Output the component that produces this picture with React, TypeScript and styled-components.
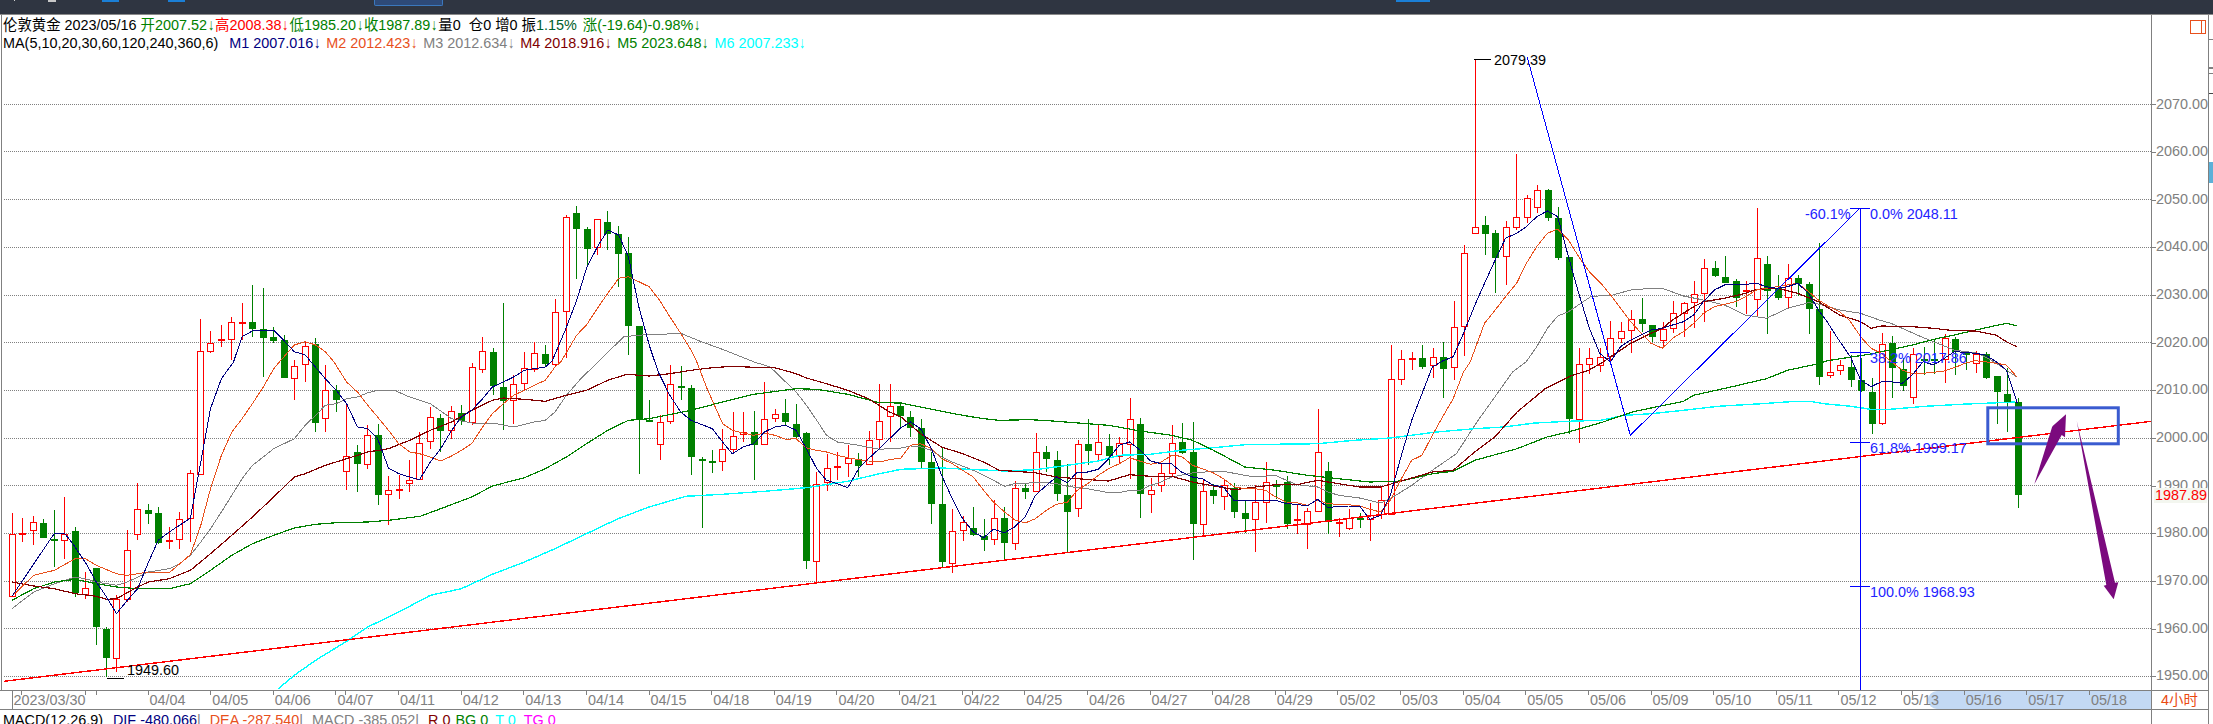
import React from "react";
import styled, { createGlobalStyle } from "styled-components";

const FONT = `"Liberation Sans", "Noto Sans CJK SC", Arial, sans-serif`;

const Global = createGlobalStyle`
  html, body { margin: 0; padding: 0; background: #fff; overflow: hidden; }
  #root { width: 2213px; height: 724px; }
`;

const Page = styled.div`
  width: 2213px;
  height: 724px;
  overflow: hidden;
  background: #fff;
  font: 14.4px/18px ${FONT};
  display: flex;
  flex-direction: column;
`;

const TopBar = styled.div`
  flex: none;
  height: 14px;
  background: #2f3541;
  border-bottom: 1px solid #8a8a8a;
  display: flex;
  align-items: flex-start;
`;

const TopMark = styled.span<{ $gap: number; $w: number; $h: number; $c: string; $line?: string }>`
  flex: none;
  margin-left: ${(p) => p.$gap}px;
  width: ${(p) => p.$w}px;
  height: ${(p) => p.$h}px;
  background: ${(p) => p.$c};
  box-sizing: border-box;
  border-bottom: ${(p) => (p.$line ? `1px solid ${p.$line}` : "none")};
  border-left: ${(p) => (p.$line ? `1px solid ${p.$line}` : "none")};
  border-right: ${(p) => (p.$line ? `1px solid ${p.$line}` : "none")};
  border-radius: ${(p) => (p.$line ? "0 0 2px 2px" : "0")};
`;

const ChartRow = styled.div`
  flex: none;
  height: 675px;
  display: flex;
`;

const Plot = styled.div`
  position: relative;
  flex: none;
  box-sizing: border-box;
  width: 2151px;
  height: 675px;
  border-left: 1px solid #808080;
  margin-left: 1px;
  margin-right: -1px;
`;

const PlotSvg = styled.svg`
  display: block;
  width: 2150px;
  height: 675px;
`;

const Info = styled.div`
  position: absolute;
  left: 1px;
  top: 1px;
`;

const InfoRow = styled.div`
  display: flex;
  height: 18.4px;
  white-space: pre;
`;

const Seg = styled.span<{ $c: string; $gap?: number }>`
  color: ${(p) => p.$c};
  margin-left: ${(p) => p.$gap ?? 0}px;
`;

const Arrow = styled.span<{ $c: string }>`
  color: ${(p) => p.$c};
  display: inline-block;
  width: 8px;
  text-align: center;
  font-size: 16px;
  transform: scaleX(0.75);
`;

const PriceAxis = styled.div`
  position: relative;
  flex: none;
  box-sizing: border-box;
  width: 58px;
  height: 709px;
  margin-bottom: -34px;
  border-left: 1px solid #808080;
  border-right: 1px solid #808080;
  padding-top: 65.5px;
  z-index: 2;
  background: transparent;
`;

const PriceLabel = styled.div`
  position: relative;
  height: 47.67px;
  line-height: 47.67px;
  padding-left: 4px;
  color: #808080;
  &::before {
    content: "";
    position: absolute;
    left: 0;
    top: 50%;
    width: 4px;
    border-top: 1px solid #808080;
  }
`;

const LastPrice = styled.div`
  position: absolute;
  left: 2px;
  top: 473px;
  width: 53px;
  height: 15px;
  line-height: 15px;
  padding-left: 1px;
  box-sizing: border-box;
  color: #f00;
  background: #f3f6ef;
`;

const CornerBox = styled.div`
  position: absolute;
  left: 38px;
  top: 5px;
  width: 16px;
  height: 14px;
  box-sizing: border-box;
  border: 1px solid #e8501c;
  &::after {
    content: "";
    position: absolute;
    right: 3px;
    top: 0;
    bottom: 0;
    border-left: 1px solid #e8501c;
  }
`;

const Gutter = styled.div`
  flex: 1;
  display: flex;
  flex-direction: column;
`;

const GutterMark = styled.div<{ $gap: number; $h: number; $c: string }>`
  margin-top: ${(p) => p.$gap}px;
  height: ${(p) => p.$h}px;
  background: ${(p) => p.$c};
`;

const TimeRow = styled.div`
  flex: none;
  height: 20px;
  box-sizing: border-box;
  display: flex;
  border-top: 1px solid #808080;
  border-bottom: 1px solid #808080;
  width: 2209px;
`;

const TimeAxis = styled.div`
  position: relative;
  flex: none;
  width: 2151px;
  height: 18px;
  display: flex;
  box-sizing: border-box;
  padding-left: 11.5px;
`;

const Selection = styled.div`
  position: absolute;
  left: 1928px;
  right: 0;
  top: 0;
  bottom: 0;
  background: #c3d9f4;
  border-radius: 9px 0 0 9px;
`;

const FirstCell = styled.div`
  position: relative;
  flex: none;
  width: 136px;
  box-sizing: border-box;
  border-left: 1px solid #808080;
  padding-left: 1px;
  color: #808080;
`;

const TimeCell = styled.div`
  position: relative;
  flex: none;
  width: 62.64px;
  padding-left: 2px;
  box-sizing: border-box;
  color: #808080;
  &::before {
    content: "";
    position: absolute;
    left: 0;
    top: 0;
    height: 4px;
    border-left: 1px solid #808080;
  }
`;

const StrayTick = styled.span<{ $x: number }>`
  position: absolute;
  left: ${(p) => p.$x}px;
  top: 0;
  height: 4px;
  border-left: 1px solid #808080;
`;

const CycleCell = styled.div`
  flex: none;
  width: 58px;
  box-sizing: border-box;
  border-left: 1px solid #808080;
  padding-left: 9px;
  color: #ea4a10;
`;

const MacdRow = styled.div`
  flex: 1;
  display: flex;
  white-space: pre;
  padding: 1px 0 0 3px;
  box-sizing: border-box;
  position: relative;
  width: 2209px;
  box-shadow: inset -1px 0 0 #808080;
`;

const MacdAxisLine = styled.div`
  position: absolute;
  left: 2151px;
  top: 0;
  bottom: 0;
  border-left: 1px solid #808080;
`;

const Chip = styled.text<{ $c: string }>`
  font: 14.4px ${FONT};
  fill: ${(p) => p.$c};
`;

const Ma = styled.polyline<{ $c: string; $w: number }>`
  fill: none;
  stroke: ${(p) => p.$c};
  stroke-width: ${(p) => p.$w};
  stroke-linejoin: round;
  shape-rendering: crispEdges;
`;

const Grid = styled.line`
  stroke: #808080;
  stroke-width: 1;
  stroke-dasharray: 1 1;
  shape-rendering: crispEdges;
`;

const Rule = styled.line<{ $c: string; $w?: number }>`
  stroke: ${(p) => p.$c};
  stroke-width: ${(p) => p.$w ?? 1};
  shape-rendering: crispEdges;
`;

const Body = styled.rect<{ $up: boolean }>`
  fill: ${(p) => (p.$up ? "#fff" : "#008000")};
  stroke: ${(p) => (p.$up ? "#f00" : "none")};
  stroke-width: 1;
  shape-rendering: crispEdges;
`;

const Zone = styled.rect`
  fill: none;
  stroke: #3a5bd0;
  stroke-width: 3;
`;

const Pointer = styled.polygon`
  fill: #7b0a7e;
`;

/* ---------- data, read off the picture ---------- */
const vv = (v: number) => (v < 0 ? 1086 - v : v) / 3;
const SC: Record<number, [number, number]> = {
  1: [0, 1.742],
  2: [900, 2.24],
  3: [1600, 2.558],
};
type Run = [number, number[]];
const toPts = (runs: Run[]) => {
  const out: string[] = [];
  for (const [s, a] of runs) {
    for (let i = 0; i < a.length; i += 2) {
      if (s === 10) out.push(`${(1820 + a[i] / 3).toFixed(1)},${(320 + a[i + 1] / 3).toFixed(1)}`);
      else out.push(`${(SC[s][0] + a[i] / SC[s][1]).toFixed(1)},${vv(a[i + 1]).toFixed(1)}`);
    }
  }
  return out.join(" ");
};

const M1: Run[] = [
  [1, [19,-703,93,-514,111,-514,129,-555,150,-610,166,-660,184,-705,201,-755,220,-715,238,-680,257,-600,274,-535,293,-510,311,-490,330,-468,348,-300,365,-140,384,-50,405,1086,420,1010,438,993,475,990,492,1020,511,1055,530,1065,545,-10,565,-50,584,-85,602,-125,621,-195,639,-200,656,-230,675,-318,693,-335,712,-345,729,-353,748,-300,766,-260,785,-205,802,-165,820,-145,839,-110,856,-75,875,-60,893,-45,912,-25,929,-20,948,-15,960,1083,983,990,1003,900,1020,805,1039,740,1057,690,1076,705,1093,770,1111,920,1130,1040,1145,-30,1165,-100,1184,-150,1202,-175,1239,-200,1257,-240,1274,-275,1293,-255,1311,-245,1330,-210,1348,-195,1367,-190,1385,-205,1403,-260,1421,-320,1438,-355,1457,-365,1475,-377,1494,-320,1511,-290,1530,-260,1548,-230]],
  [2, [0,-197,21,-180,44,-200,68,-260,91,-340,115,-410,138,-470,162,-510,185,-527,207,-502,232,-512,254,-495,278,-465,301,-400,326,-370,348,-345,373,-362,395,-330,418,-330,442,-322,465,-290,489,-250,512,-240,536,-265,559,-297,583,-305,606,-305,628,-330,653,-345,675,-350,700,-370,722,-375,747,-417,770,-415,794,-417,817,-415,839,-415,863,-425,887,-427,910,-432,933,-412,957,-437,980,-433,1003,-432,1027,-432,1050,-472,1074,-460,1096,-400,1121,-280,1144,-175,1167,-95,1190,-15,1213,1083,1237,1070,1260,1000,1284,920,1307,850,1331,780,1354,715,1379,700,1401,680,1424,650,1448,633,1471,650,1495,770,1518,880,1542,985,1565,1060]],
  [3, [24,1086,50,1040,76,1020,103,1005,128,990,157,985,183,975,211,965,237,945,262,905,290,870,316,855,344,853,369,853,398,850,423,860,451,865,477,860,503,850,531,880,556,930]],
  [10, [15,0,50,55,88,110,119,180,150,200,181,185,211,185,244,190,274,165,306,125,338,135,370,115,400,95,432,97,463,100,493,105,526,125,556,150,589,250]],
];
const M2: Run[] = [
  [1, [19,-703,57,-640,93,-625,129,-590,147,-590,166,-610,201,-635,220,-640,257,-630,293,-632,330,-578,348,-490,365,-380,384,-280,402,-210,420,-170,438,-125,457,-75,475,-20,485,1086,511,1035,530,1025,548,1035,565,1055,580,-0.1,602,-60,621,-90,639,-130,656,-165,675,-205,693,-245,712,-270,729,-275,748,-285,766,-297,785,-282,802,-265,820,-245,839,-195,856,-155,875,-125,893,-100,912,-85,929,-70,948,-55,965,-15,975,1086,1003,1005,1020,975,1039,925,1057,880,1076,835,1093,830,1111,845,1129,860,1147,900,1165,950,1184,1000,1202,1050,1212,-0.1,1230,-80,1257,-185,1274,-205,1293,-213,1311,-220,1330,-213,1348,-220,1367,-232,1385,-230,1403,-258,1421,-265,1438,-270,1457,-280,1475,-287,1494,-293,1511,-297,1530,-300,1548,-293]],
  [2, [0,-288,21,-250,44,-245,68,-260,91,-290,115,-305,138,-325,162,-345,185,-385,207,-420,232,-450,254,-473,278,-483,301,-470,326,-445,348,-427,373,-420,395,-385,418,-365,442,-340,465,-320,489,-305,512,-287,536,-298,559,-307,583,-300,606,-280,628,-283,653,-310,675,-320,700,-333,722,-350,747,-375,770,-380,794,-380,817,-385,839,-405,863,-420,887,-422,910,-430,933,-415,957,-425,980,-427,1003,-428,1027,-432,1050,-442,1074,-450,1096,-415,1121,-350,1144,-295,1167,-280,1190,-220,1213,-165,1237,-110,1260,-30,1275,1086,1307,970,1331,930,1354,890,1379,850,1401,790,1424,740,1448,700,1471,687,1495,720,1518,770,1542,815]],
  [3, [0,850,28,890,50,925,76,965,103,1000,128,1030,157,1045,183,1015,211,995,237,970,262,940,290,920,316,913,344,905,369,890,398,870,423,865,451,860,477,855,503,850,531,875,556,900,584,920,610,935]],
  [10, [85,0,119,50,150,85,181,100,211,125,244,150,274,162,306,160,338,157,370,153,400,143,432,130,463,122,493,125,526,130,556,135,589,172]],
];
const M3: Run[] = [
  [1, [19,-740,57,-690,93,-665,129,-645,147,-650,166,-660,201,-670,220,-660,257,-630,293,-620,311,-605,330,-580,348,-540,365,-500,384,-450,402,-400,420,-350,438,-310,457,-285,475,-260,511,-230,530,-190,548,-160,565,-130,584,-125,602,-110,621,-105,639,-92,656,-85,685,-85,712,-105,748,-125,785,-170,820,-183,856,-183,893,-195,929,-180,948,-175,965,-150,985,-100,1010,-50,1040,1086,1085,1010,1129,1003,1147,1005,1170,1000,1184,1000,1220,1025,1260,1050,1312,-0.1,1340,-15,1367,-60,1385,-90,1403,-130,1421,-175,1438,-220,1457,-240,1494,-250,1530,-262]],
  [2, [0,-258,21,-252,44,-255,68,-265,91,-285,115,-300,162,-325,207,-355,232,-373,254,-365,301,-362,326,-362,348,-365,373,-373,418,-380,465,-392,489,-392,512,-385,536,-385,559,-370,583,-360,606,-345,653,-333,700,-328,722,-328,770,-340,794,-345,839,-340,863,-355,887,-368,933,-375,957,-390,980,-400,1027,-408,1074,-423,1096,-410,1144,-370,1190,-325,1244,-275,1290,-180,1330,-105,1370,-30,1400,1086,1424,1040,1448,985,1471,948,1495,935,1545,890]],
  [3, [0,887,30,885,76,870,128,865,157,865,211,888,262,900,316,915,369,945,423,955,451,940,477,925,531,908,556,912,610,930,664,940]],
  [10, [175,0,210,10,300,50,400,90,470,100,510,120,556,150,589,172]],
];
const M4: Run[] = [
  [1, [19,-660,57,-672,93,-680,129,-695,166,-703,184,-712,201,-710,238,-675,257,-660,293,-650,330,-625,365,-575,402,-520,438,-465,475,-405,511,-345,530,-335,565,-310,602,-290,639,-270,675,-260,712,-235,748,-205,785,-180,820,-145,856,-115,875,-108,912,-112,948,-118,985,-100,1020,-85,1057,-55,1090,-37,1129,-42,1165,-35,1202,-25,1239,-17,1275,-13,1311,-16,1348,-17,1385,-35,1403,-48,1438,-65,1475,-85,1511,-110,1548,-150]],
  [2, [0,-165,44,-215,91,-255,138,-275,185,-300,220,-325,254,-328,301,-332,348,-345,395,-350,442,-355,465,-357,512,-338,559,-343,606,-343,653,-360,700,-372,747,-383,794,-375,839,-368,887,-368,933,-355,980,-365,1027,-375,1074,-375,1121,-357,1190,-330,1237,-325,1285,-270,1330,-225,1380,-150,1443,-80,1500,-42,1540,-25]],
  [3, [0,1090,25,1070,76,1030,128,1000,157,985,183,960,237,920,262,905,316,895,369,880,398,868,451,865,503,880,556,905,610,945,664,965,691,985,717,978,797,980,850,985,904,992,958,993,1010,1005,1037,1025,1063,1040]],
];
const M5: Run[] = [
  [1, [19,-715,57,-680,93,-660,129,-652,166,-665,201,-675,238,-680,293,-680,330,-665,365,-625,402,-580,438,-545,475,-520,511,-498,548,-487,584,-482,639,-480,675,-475,730,-463,766,-440,820,-405,856,-372,912,-347,948,-320,985,-285,1020,-245,1057,-205,1093,-175,1129,-170,1202,-145,1257,-120,1311,-97,1385,-80,1421,-82,1475,-97,1530,-122]],
  [2, [0,-123,44,-135,91,-148,138,-160,185,-170,220,-175,290,-173,340,-177,418,-185,465,-190,536,-207,606,-220,653,-235,700,-265,770,-315,839,-325,910,-340,980,-350,1050,-360,1121,-357,1190,-335,1237,-328,1285,-295,1380,-260,1447,-225,1495,-210,1568,-182]],
  [3, [80,-150,128,-138,211,-118,237,-100,343,-72,423,-50,477,-25,556,-5,580,1082,691,1062,797,1035,851,1018,904,1005,958,990,1037,970,1063,977]],
];
const M6: Run[] = [
  [1, [483,-980,511,-940,548,-895,602,-838,639,-795,693,-750,748,-700,802,-680,856,-637,912,-600,965,-560,1020,-515,1075,-470,1129,-435,1193,-403,1257,-397,1330,-388,1403,-377,1475,-358,1530,-335]],
  [2, [0,-322,91,-318,150,-322,232,-327,301,-323,373,-310,442,-297,489,-280,559,-277,628,-265,700,-257,770,-248,933,-245,1015,-235,1096,-228,1200,-210,1285,-200,1350,-195,1420,-183,1495,-178,1568,-175]],
  [3, [60,-160,128,-155,211,-145,300,-133,410,-125,500,-118,535,-118,570,-125,640,-133,690,-142,740,-142,830,-133,920,-127,1060,-120]],
];

/* [up, high, top, bottom, low] — negative = lower half of the picture */
const K: number[][] = [
[1,-453,-517,-703,-705],[1,-468,-514,-514,-540],[1,-462,-481,-503,-550],[0,-470,-484,-527,-527],[0,-445,-530,-530,-615],
[1,-405,-515,-535,-590],[0,-495,-508,-693,-705],[1,-630,-677,-695,-710],[0,-618,-618,-795,-850],[0,-795,-800,-887,-945],
[1,-700,-712,-887,-930],[1,-505,-565,-712,-720],[1,-363,-442,-517,-533],[0,-427,-445,-455,-487],[0,-435,-453,-542,-545],
[1,-495,-533,-538,-560],[1,-450,-472,-530,-560],[1,-325,-333,-468,-540],[1,957,1054,-337,-340],[1,993,1030,1052,1060],
[1,975,1018,1018,1040],[1,950,967,1018,1080],[1,910,965,965,1020],[0,855,966,987,1010],[0,865,988,1013,-45],
[0,982,1012,1024,1030],[0,1005,1020,-47,-47],[1,1080,-12,-47,-113],[1,1025,1037,-5,-60],[0,1015,1033,-183,-210],
[1,-10,-85,-167,-210],[0,-70,-85,-113,-150],[1,-130,-283,-326,-385],[0,-250,-270,-305,-390],[1,-190,-220,-305,-320],
[0,-187,-218,-398,-430],[1,-342,-385,-395,-490],[1,-340,-380,-380,-410],[1,-295,-355,-362,-390],[1,-210,-243,-352,-355],
[1,-135,-165,-238,-260],[0,-155,-168,-207,-270],[1,-133,-148,-205,-232],[0,-130,-153,-177,-190],[1,-2,-15,-180,-190],
[1,1010,1053,-22,-33],[0,1045,1056,-72,-100],[0,910,-75,-116,-205],[1,-40,-67,-115,-185],[1,1055,-19,-64,-85],
[1,1025,1060,-22,-30],[0,1035,1063,-5,-15],[1,897,935,-7,-15],[1,645,652,932,1075],[0,618,640,686,836],
[0,682,687,746,795],[1,658,658,742,765],[0,633,667,702,750],[0,678,703,762,860],[0,712,760,978,1065],
[0,978,978,-170,-335],[0,-115,-173,-173,-180],[1,-158,-180,-245,-293],[1,-10,-67,-178,-185],[0,-12,-73,-73,-113],
[0,-68,-78,-285,-338],[0,-285,-290,-290,-497],[0,-265,-298,-298,-333],[1,-200,-262,-298,-328],[1,-150,-223,-262,-275],
[1,-150,-210,-217,-240],[0,-147,-210,-250,-353],[1,-60,-170,-245,-250],[1,-140,-157,-167,-180],[0,-110,-153,-180,-190],
[0,-127,-186,-225,-230],[0,-210,-212,-597,-620],[1,-330,-365,-598,-663],[1,-277,-317,-360,-387],[1,-270,-312,-312,-355],
[1,-250,-287,-302,-345],[0,-273,-290,-312,-345],[1,-208,-235,-305,-310],[1,-65,-178,-232,-265],[1,-65,-133,-163,-240],
[0,-120,-132,-162,-200],[0,-148,-165,-197,-225],[0,-170,-198,-300,-320],[0,-270,-300,-425,-485],[0,-255,-427,-600,-615],
[1,-440,-508,-602,-632],[1,-462,-481,-503,-538],[0,-435,-498,-520,-522],[0,-470,-523,-533,-567],[1,-415,-469,-530,-550],
[0,-435,-468,-543,-597],[1,-358,-378,-542,-565],[0,-365,-378,-390,-410],[1,-213,-271,-387,-390],[0,-253,-270,-292,-330],
[0,-267,-294,-397,-417],[0,-307,-400,-450,-570],[1,-235,-247,-437,-465],[0,-170,-246,-267,-310],[1,-190,-241,-275,-295],
[0,-217,-252,-282,-310],[1,-225,-244,-282,-305],[1,-108,-172,-245,-350],[0,-168,-186,-395,-467],[1,-348,-383,-395,-453],
[1,-305,-334,-370,-390],[1,-190,-244,-334,-345],[0,-182,-240,-272,-275],[0,-180,-270,-486,-594],[1,-355,-388,-485,-525],
[0,-365,-385,-402,-425],[1,-352,-368,-403,-445],[0,-362,-377,-450,-467],[0,-415,-453,-470,-512],[1,-370,-420,-470,-570],
[1,-300,-361,-421,-483],[0,-355,-365,-375,-410],[0,-342,-360,-487,-500],[1,-430,-470,-470,-515],[1,-438,-448,-485,-560],
[1,-141,-271,-446,-450],[0,-300,-327,-481,-515],[1,-467,-481,-481,-525],[1,-440,-469,-497,-505],[0,-453,-467,-473,-498],
[1,-423,-458,-472,-537],[1,-372,-415,-455,-470],[1,1035,-52,-457,-460],[1,1050,1078,-50,-68],[1,1055,1073,1073,-25],
[0,1035,1075,-15,-22],[1,1045,1072,-10,-47],[0,1027,1072,-20,-107],[1,903,982,-15,-55],[1,736,760,977,1067],
[1,178,680,700,700],[0,648,676,701,765],[0,690,699,773,878],[1,663,680,769,855],[1,462,652,680,690],
[1,585,595,650,670],[1,555,571,620,638],[0,567,570,653,662],[0,622,654,773,780],[0,771,771,-170,-215],
[1,1045,-7,-170,-242],[1,1045,1075,-5,-35],[1,1045,1072,-10,-30],[1,962,1015,1068,-10],[1,965,992,1015,1028],
[1,930,958,990,1058],[0,895,958,972,995],[0,975,975,1010,1025],[1,965,988,1020,1040],[1,903,940,985,1000],
[1,905,910,940,1010],[1,843,881,907,983],[1,778,805,880,965],[0,783,804,827,830],[0,768,832,848,850],
[0,838,843,895,920],[1,843,870,870,943],[1,624,775,898,952],[0,768,792,872,1003],[0,825,865,893,900],
[1,792,835,892,925],[0,825,835,852,887],[0,847,852,926,1003],[0,730,927,-44,-68],[1,993,-30,-40,-47],
[1,1080,-10,-25,-38],[0,1065,-15,-55,-75],[0,1075,-55,-88,-90],[0,-48,-90,-185,-215],[1,1000,1033,-184,-190],
[0,1008,1028,-19,-109],[0,1075,-22,-71,-87],[1,1045,1063,-104,-126],[0,1040,1076,1076,-39],[0,1018,1076,1076,-35],
[1,1002,1015,1078,-62],[0,1010,1018,1055,-39],[0,1055,1055,1065,-24],[1,1052,1063,1090,-32],[0,1056,1062,-47,-50],
[0,-42,-42,-89,-186],[0,-19,-96,-119,-209],[0,-109,-119,-399,-437],
];

const GRID_Y = [104, 151, 199, 247, 295, 342, 390, 438, 485, 533, 581, 628, 676];
const PRICES = ["2070.00","2060.00","2050.00","2040.00","2030.00","2020.00","2010.00","2000.00","1990.00","1980.00","1970.00","1960.00","1950.00"];
const DATES = ["04/04","04/05","04/06","04/07","04/11","04/12","04/13","04/14","04/15","04/18","04/19","04/20","04/21","04/22","04/25","04/26","04/27","04/28","04/29","05/02","05/03","05/04","05/05","05/06","05/09","05/10","05/11","05/12","05/13","05/16","05/17","05/18"];
const STRAY = [21, 85, 96, 345, 972, 1285, 1912];

const GREEN = "#008000";
const RED = "#f00";
const NAVY = "#000080";
const ORANGE = "#e8501c";
const GRAY = "#808080";
const MAROON = "#800000";
const CYAN = "#00ffff";
const BLUE = "#2222ff";

const z10 = (pts: number[]) => {
  const o: string[] = [];
  for (let i = 0; i < pts.length; i += 2) o.push(`${(1820 + pts[i] / 3).toFixed(1)},${(320 + pts[i + 1] / 3).toFixed(1)}`);
  return o.join(" ");
};

const Candle = ({ k, i }: { k: number[]; i: number }) => {
  const [up, hi, top, bot, lo] = k;
  const x = Math.round(11 + i * 10.447);
  const c = up ? RED : GREEN;
  const y1 = Math.round(vv(top));
  const y2 = Math.round(vv(bot));
  const doji = y2 - y1 < 2;
  return (
    <g>
      <Rule x1={x + 0.5} x2={x + 0.5} y1={vv(hi)} y2={vv(lo)} $c={c} />
      {doji ? (
        <Rule x1={x - 3} x2={x + 4} y1={y1 + 0.5} y2={y1 + 0.5} $c={c} $w={2} />
      ) : up ? (
        <Body $up x={x - 2.5} y={y1 + 0.5} width={6} height={y2 - y1} />
      ) : (
        <Body $up={false} x={x - 3} y={y1} width={7} height={y2 - y1} />
      )}
    </g>
  );
};

const Val = ({ label, value, c, gap }: { label: string; value: string; c: string; gap?: number }) => (
  <>
    <Seg $c={c} $gap={gap}>{label}{value}</Seg>
    <Arrow $c={c}>↓</Arrow>
  </>
);

const App = () => (
  <Page>
    <Global />
    <TopBar>
      <TopMark $gap={14} $w={1} $h={1} $c="#d0d0d0" />
      <TopMark $gap={33} $w={8} $h={2} $c="#c8c8c8" />
      <TopMark $gap={46} $w={17} $h={2} $c="#1b7fd6" />
      <TopMark $gap={49} $w={17} $h={2} $c="#1b7fd6" />
      <TopMark $gap={189} $w={69} $h={6} $c="#2e4a78" $line="#3b78bd" />
      <TopMark $gap={953} $w={34} $h={2} $c="#1b7fd6" />
    </TopBar>
    <ChartRow>
      <Plot>
        <PlotSvg viewBox="1 15 2150 675">
          {GRID_Y.map((y) => (
            <Grid key={y} x1={3} x2={2151} y1={y + 0.5} y2={y + 0.5} />
          ))}
          {K.map((k, i) => (
            <Candle key={i} k={k} i={i} />
          ))}
          <Ma $c={GRAY} $w={1} points={toPts(M3)} />
          <Ma $c={CYAN} $w={1.4} points={toPts(M6)} />
          <Ma $c={GREEN} $w={1.2} points={toPts(M5)} />
          <Ma $c={MAROON} $w={1.2} points={toPts(M4)} />
          <Ma $c={ORANGE} $w={1} points={toPts(M2)} />
          <Ma $c={NAVY} $w={1} points={toPts(M1)} />
          <Ma $c={RED} $w={1.4} points="3,681.3 2150.4,421.3" />
          <Ma $c="#0000ff" $w={1} points="1526.3,57.3 1629.3,435.3 1858.8,208.3" />
          <Rule $c="#0000ff" x1={1859.5} x2={1859.5} y1={208} y2={690} />
          {[208, 352, 442, 586].map((y) => (
            <Rule key={y} $c="#0000ff" x1={1849} x2={1869} y1={y + 0.5} y2={y + 0.5} />
          ))}
          <Rule $c="#000" x1={1473} x2={1490} y1={59.5} y2={59.5} />
          <Rule $c="#000" x1={106} x2={123} y1={678.5} y2={678.5} />
          <Chip $c="#000" x={1493} y={65}>2079.39</Chip>
          <Chip $c="#000" x={126} y={675}>1949.60</Chip>
          <Chip $c={BLUE} x={1804} y={219}>-60.1%</Chip>
          <Chip $c={BLUE} x={1869} y={219}>0.0% 2048.11</Chip>
          <Chip $c={BLUE} x={1869} y={363}>38.2% 2017.86</Chip>
          <Chip $c={BLUE} x={1869} y={453}>61.8% 1999.17</Chip>
          <Chip $c={BLUE} x={1869} y={597}>100.0% 1968.93</Chip>
          <Zone x={1986.8} y={407.8} width={130.5} height={36} />
          <Pointer points={z10([640,493,693,322,695,318,735,283,732,352,722,345])} />
          <Pointer points={z10([767,302,882,788,892,787,878,838,848,797,856,795])} />
        </PlotSvg>
        <Info>
          <InfoRow>
            <Seg $c="#000">伦敦黄金</Seg>
            <Seg $c="#000" $gap={4}>2023/05/16</Seg>
            <Val label="开" value="2007.52" c={GREEN} gap={4} />
            <Val label="高" value="2008.38" c={RED} />
            <Val label="低" value="1985.20" c={GREEN} />
            <Val label="收" value="1987.89" c={GREEN} />
            <Seg $c="#000">量0</Seg>
            <Seg $c="#000" $gap={8}>仓0</Seg>
            <Seg $c="#000" $gap={4}>增0</Seg>
            <Seg $c="#000" $gap={4}>振</Seg>
            <Seg $c="#00602a">1.15%</Seg>
            <Val label="涨" value="(-19.64)-0.98%" c={GREEN} gap={6} />
          </InfoRow>
          <InfoRow>
            <Seg $c="#000">MA(5,10,20,30,60,120,240,360,6)</Seg>
            <Val label="M1 " value="2007.016" c={NAVY} gap={11} />
            <Val label="M2 " value="2012.423" c={ORANGE} gap={5} />
            <Val label="M3 " value="2012.634" c={GRAY} gap={5} />
            <Val label="M4 " value="2018.916" c={MAROON} gap={5} />
            <Val label="M5 " value="2023.648" c={GREEN} gap={5} />
            <Val label="M6 " value="2007.233" c={CYAN} gap={5} />
          </InfoRow>
        </Info>
      </Plot>
      <PriceAxis>
        <CornerBox />
        {PRICES.map((p) => (
          <PriceLabel key={p}>{p}</PriceLabel>
        ))}
        <LastPrice>1987.89</LastPrice>
      </PriceAxis>
      <Gutter>
        <GutterMark $gap={24} $h={1} $c="#808080" />
        <GutterMark $gap={27} $h={2} $c="#808080" />
        <GutterMark $gap={4} $h={1} $c="#808080" />
        <GutterMark $gap={19} $h={1} $c="#444" />
        <GutterMark $gap={68} $h={21} $c="#5cb0d8" />
      </Gutter>
    </ChartRow>
    <TimeRow>
      <TimeAxis>
        <Selection />
        {STRAY.map((x) => (
          <StrayTick key={x} $x={x} />
        ))}
        <FirstCell>2023/03/30</FirstCell>
        {DATES.map((d) => (
          <TimeCell key={d}>{d}</TimeCell>
        ))}
      </TimeAxis>
      <CycleCell>4小时</CycleCell>
    </TimeRow>
    <MacdRow>
      <MacdAxisLine />
      <Seg $c="#000">MACD(12,26,9)</Seg>
      <Seg $c={NAVY} $gap={10}>DIF -480.066</Seg>
      <Seg $c={GRAY}>|</Seg>
      <Seg $c={ORANGE} $gap={9}>DEA -287.540</Seg>
      <Seg $c={GRAY}>|</Seg>
      <Seg $c={GRAY} $gap={9}>MACD -385.052</Seg>
      <Seg $c={GRAY}>|</Seg>
      <Seg $c={MAROON} $gap={9}>R 0</Seg>
      <Seg $c={GREEN} $gap={5}>BG 0</Seg>
      <Seg $c={CYAN} $gap={7}>T 0</Seg>
      <Seg $c="#ff00ff" $gap={8}>TG 0</Seg>
    </MacdRow>
  </Page>
);

export default App;
